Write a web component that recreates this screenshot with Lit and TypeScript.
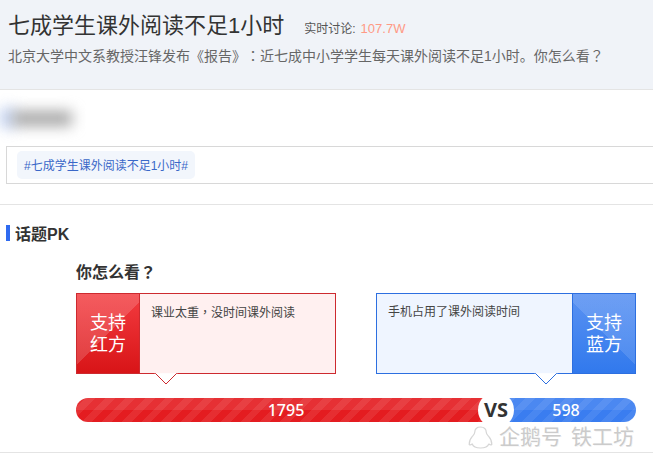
import { LitElement, html, css, svg } from "lit";
import { customElement } from "lit/decorators.js";

const penguin = svg`<svg class="penguin" width="25" height="23" viewBox="0 0 25 23" fill="#fff" stroke="#d6d6d6" stroke-width="1.2" stroke-linejoin="round">
  <path d="M12.500 1c-3.800 0-5.700 2.200-5.700 5 0 1.800-1 2.800-2.300 4.200C2.500 12.500 1 15.500 1.200 18.500c.8.800 2 .4 3-.5 1 2.800 4.200 4 8.300 4s7.300-1.200 8.300-4c1 .9 2.200 1.300 3 .5.200-3-1.300-6-3.300-8.300-1.300-1.400-2.300-2.400-2.300-4.200 0-2.800-1.900-5-5.700-5z"/>
</svg>`;

@customElement("app-root")
export class AppRoot extends LitElement {
  static styles = css`
    :host {
      display: block;
      position: relative;
      width: 653px;
      height: 460px;
      overflow: hidden;
      background: #fff;
      font-family: "Liberation Sans", "Noto Sans CJK SC", sans-serif;
      color: #333;
      text-spacing-trim: space-all;
    }
    .tc { font-family: "Noto Sans CJK TC", sans-serif; }
    .head {
      box-sizing: border-box;
      height: 90px;
      padding: 9px 8px 0;
      background: #f0f3f8;
      border-bottom: 1px solid #e4e4e4;
    }
    .title-row { display: flex; align-items: center; height: 34px; }
    h1 { margin: 0; font-size: 22px; font-weight: 400; color: #333; line-height: 34px; }
    .live { margin-left: 20px; font-size: 12px; color: #555; padding-top: 3px; }
    .live b { font-weight: 400; font-size: 13px; color: #ff9a85; margin-left: 5px; }
    .sub { margin-top: 2px; font-size: 14px; line-height: 20px; color: #666; white-space: nowrap; }
    .blur-row { height: 56px; position: relative; }
    .blur {
      position: absolute; left: 12px; top: 21px; width: 60px; height: 15px;
      background: #a6a6a6; filter: blur(7px);
    }
    .blur-accent {
      position: absolute; left: 0; top: 18px; width: 16px; height: 20px;
      background: #c5d5f5; filter: blur(7px);
    }
    .topic {
      box-sizing: border-box;
      margin-left: 6px;
      height: 38px;
      border: 1px solid #d8d8d8;
      border-right: none;
      padding: 4px 0 0 10px;
    }
    .tag {
      display: inline-block;
      box-sizing: border-box;
      height: 28px;
      line-height: 26px;
      padding: 2px 7px 0;
      border-radius: 5px;
      background: #f2f6fc;
      color: #3a68c8;
      font-size: 12px;
    }
    .pk {
      margin-top: 20px;
      border-top: 1px solid #e4e4e4;
      height: 247px;
      border-bottom: 1px solid #e4e4e4;
    }
    .pk-title {
      margin: 20px 0 0 6px;
      display: flex;
      align-items: center;
      gap: 5px;
      height: 16px;
      font-size: 16px;
      font-weight: 700;
      color: #333;
    }
    .pk-title i { width: 4px; height: 16px; background: #2f6bf0; }
    .content { margin: 18px 17px 0 76px; }
    h2 { margin: 0; height: 24px; line-height: 24px; font-size: 16px; font-weight: 700; color: #333; }
    .cards { margin-top: 10px; display: flex; justify-content: space-between; }
    .card {
      box-sizing: border-box;
      position: relative;
      width: 260px;
      height: 81px;
      display: flex;
      border: 1px solid;
      font-size: 12px;
      color: #444;
      line-height: 18px;
    }
    .card.red { border-color: #cd2a2f; background: #fff0f0; }
    .card.blue { border-color: #2d6fe0; background: #eff5ff; }
    .btn {
      position: relative;
      box-sizing: border-box;
      flex: none;
      width: 63px;
      color: #fff;
      font-size: 18px;
      line-height: 22px;
      text-align: center;
      padding-top: 18px;
    }
    .red .btn { background: linear-gradient(180deg, #f33c40, #d81417); border-right: 1px solid #cd2a2f; }
    .blue .btn { background: linear-gradient(180deg, #5a92f2, #3179ed); border-left: 1px solid #2d6fe0; }
    .btn::before { content: ""; position: absolute; inset: 0; pointer-events: none; }
    .red .btn::before { background: linear-gradient(135deg, rgba(255,255,255,.16) 50%, transparent 50%); }
    .blue .btn::before { background: linear-gradient(225deg, rgba(255,255,255,.12) 50%, transparent 50%); }
    .btn span { position: relative; }
    .txt { flex: 1; padding: 9px 11px; }
    .arrow { position: absolute; top: 78px; width: 24px; height: 13px; }
    .red .arrow { left: 77px; }
    .blue .arrow { left: 157px; }
    .bar {
      position: relative;
      margin-top: 24px;
      height: 24px;
      display: flex;
      border-radius: 12px;
      overflow: hidden;
      color: #fff;
      font-size: 16px;
      font-weight: 500;
      line-height: 24px;
      text-align: center;
      font-family: "Noto Sans", sans-serif;
    }
    .seg { position: relative; }
    .seg span { position: relative; }
    .seg.r { width: 420px; background: #e41c20; }
    .seg.b { flex: 1; background: #3a7df0; }
    .seg::before {
      content: ""; position: absolute; inset: 0;
      background: repeating-linear-gradient(135deg, transparent 0 7px, rgba(255,255,255,.08) 7px 14px);
    }
    .seg::after {
      content: ""; position: absolute; left: 0; right: 0; top: 0; height: 12px;
      background: rgba(255,255,255,.09);
    }
    .vs-wrap { position: relative; }
    .vs {
      position: absolute;
      left: 402px;
      top: -6px;
      width: 36px;
      height: 36px;
      border-radius: 50%;
      background: #fff;
      color: #333;
      font-size: 20px;
      font-weight: 700;
      line-height: 36px;
      text-align: center;
      font-family: "Noto Sans", sans-serif;
    }
    .mark {
      position: absolute;
      left: 468px;
      top: 424px;
      display: flex;
      gap: 6px;
      font-size: 21px;
      line-height: 26px;
      color: #cbcbcb;
      white-space: nowrap;
      text-shadow: 1px 1px 0 rgba(0, 0, 0, 0.05);
    }
    .mark span + span { margin-left: 3px; }
    .penguin { margin-top: 2px; }
  `;

  render() {
    return html`
      <div class="head">
        <div class="title-row">
          <h1>七成学生课外阅读不足1小时</h1>
          <div class="live">实时讨论:<b>107.7W</b></div>
        </div>
        <div class="sub">北京大学中文系教授汪锋发布《报告》<span class="tc">：</span>近七成中小学学生每天课外阅读不足1小时。你怎么看<span class="tc">？</span></div>
      </div>
      <div class="blur-row"><div class="blur-accent"></div><div class="blur"></div></div>
      <div class="topic"><span class="tag">#七成学生课外阅读不足1小时#</span></div>
      <div class="pk">
        <div class="pk-title"><i></i>话题PK</div>
        <div class="content">
          <h2>你怎么看<span class="tc">？</span></h2>
          <div class="cards">
            <div class="card red">
              <div class="btn"><span>支持<br />红方</span></div>
              <div class="txt">课业太重<span class="tc">，</span>没时间课外阅读</div>
              <svg class="arrow" viewBox="0 0 24 13"><path d="M1 1 L12 12 L23 1" fill="#fff" stroke="#cd2a2f"/><path d="M0 0h24v1.2H0z" fill="#fff0f0"/></svg>
            </div>
            <div class="card blue">
              <div class="txt">手机占用了课外阅读时间</div>
              <div class="btn"><span>支持<br />蓝方</span></div>
              <svg class="arrow" viewBox="0 0 24 13"><path d="M1 1 L12 12 L23 1" fill="#fff" stroke="#2d6fe0"/><path d="M0 0h24v1.2H0z" fill="#eff5ff"/></svg>
            </div>
          </div>
          <div class="vs-wrap">
            <div class="bar">
              <div class="seg r"><span>1795</span></div>
              <div class="seg b"><span>598</span></div>
            </div>
            <div class="vs">VS</div>
          </div>
        </div>
      </div>
      <div class="mark">${penguin}<span>企鹅号</span><span>铁工坊</span></div>
    `;
  }
}
